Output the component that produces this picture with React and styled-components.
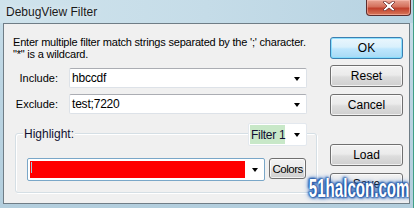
import React from 'react';
import styled, { createGlobalStyle } from 'styled-components';

const GlobalStyle = createGlobalStyle`
    html, body {
        margin: 0;
        padding: 0;
        background: #ffffff;
    }
    body {
        font-family: "Liberation Sans", Arial, sans-serif;
        font-size: 11px;
        color: #000;
    }
`;

const App = () => {
    return (
        <>
            <GlobalStyle />
            <Window>
                <TitleBar>
                    <Title>DebugView Filter</Title>
                    <CloseButton>
                        <svg width="14" height="10" viewBox="0 0 14 10">
                            <path d="M3 0 L7 3 L11 0 L13 1 L9 5 L13 9 L11 10 L7 7 L3 10 L1 9 L5 5 L1 1 Z" fill="#fff" stroke="#6b2a2a" strokeWidth="0.8" />
                        </svg>
                    </CloseButton>
                </TitleBar>
                <Client>
                    <MainColumn>
                        <Description>
                            <DescLine>Enter multiple filter match strings separated by the ';' character.</DescLine>
                            <DescLine>"*" is a wildcard.</DescLine>
                        </Description>
                        <FieldRow $top={8}>
                            <Label>Include:</Label>
                            <Combo $width={238}>
                                <ComboText>hbccdf</ComboText>
                                <Arrow />
                            </Combo>
                        </FieldRow>
                        <FieldRow $top={6}>
                            <Label>Exclude:</Label>
                            <Combo $width={238}>
                                <ComboText>test;7220</ComboText>
                                <Arrow />
                            </Combo>
                        </FieldRow>
                        <GroupBox>
                            <Legend>Highlight:</Legend>
                            <FilterCombo>
                                <FilterText>Filter 1</FilterText>
                                <Arrow />
                            </FilterCombo>
                            <ColorRow>
                                <ColorCombo>
                                    <RedFill>
                                        <Caret />
                                    </RedFill>
                                    <Arrow />
                                </ColorCombo>
                                <SmallButton>Colors</SmallButton>
                            </ColorRow>
                        </GroupBox>
                    </MainColumn>
                    <ButtonColumn>
                        <Button $default>OK</Button>
                        <Button $top={6}>Reset</Button>
                        <Button $top={7}>Cancel</Button>
                        <Button $top={28}>Load</Button>
                        <Button $top={7}>Save</Button>
                    </ButtonColumn>
                    <Watermark>51halcon.com</Watermark>
                </Client>
            </Window>
        </>
    );
};

const Window = styled.div`
    position: relative;
    width: 409px;
    height: 204px;
    padding: 0 3px 4px 1px;
    background: linear-gradient(to bottom, #c9dfea 0%, #bcd5e3 40%, #b3cedd 100%);
    border-right: 1px solid #3f9f86;
    display: flex;
    flex-direction: column;
`;

const TitleBar = styled.div`
    height: 23px;
    display: flex;
    align-items: flex-start;
    justify-content: space-between;
    background: linear-gradient(to right, #cfe3ec 0%, #c5dce8 50%, #b7d3e2 100%);
    margin: 0 -3px 0 -1px;
    padding: 0 0 0 6px;
`;

const Title = styled.div`
    font-size: 12px;
    color: #1a1a1a;
    margin-top: 5px;
    text-shadow: 0 0 6px rgba(255, 255, 255, 0.7);
`;

const CloseButton = styled.div`
    width: 43px;
    height: 15px;
    margin-right: 2px;
    border: 1px solid #5b2e2e;
    border-top: none;
    border-radius: 0 0 4px 4px;
    background: linear-gradient(to bottom, #e8a493 0%, #d4705c 45%, #c0402c 55%, #d8785a 100%);
    display: flex;
    align-items: flex-start;
    justify-content: center;
    box-shadow: inset 0 0 0 1px rgba(255, 200, 190, 0.5);
    svg {
        margin-top: 1px;
    }
`;

const Client = styled.div`
    position: relative;
    flex: 1;
    margin-left: 2px;
    background: #f0f0f0;
    border: 1px solid #6f7d86;
    display: flex;
    padding: 0 8px 0 9px;
    overflow: hidden;
`;

const MainColumn = styled.div`
    width: 305px;
    display: flex;
    flex-direction: column;
`;

const Description = styled.div`
    margin-top: 12px;
    line-height: 12px;
    letter-spacing: -0.2px;
`;

const DescLine = styled.div`
    white-space: nowrap;
`;

const FieldRow = styled.div`
    display: flex;
    align-items: center;
    margin-top: ${p => p.$top}px;
`;

const Label = styled.div`
    width: 45px;
    text-align: right;
    margin-right: 11px;
    white-space: nowrap;
`;

const Combo = styled.div`
    width: ${p => p.$width}px;
    height: 20px;
    box-sizing: border-box;
    background: #fff;
    border: 1px solid #dde2e8;
    border-top-color: #abadb3;
    border-radius: 2px;
    display: flex;
    align-items: center;
    padding: 0 6px 0 2px;
`;

const ComboText = styled.div`
    flex: 1;
    font-size: 12px;
    letter-spacing: -0.2px;
`;

const Arrow = styled.div`
    width: 0;
    height: 0;
    border-left: 3.5px solid transparent;
    border-right: 3.5px solid transparent;
    border-top: 4px solid #000;
    margin-top: 1px;
`;

const GroupBox = styled.div`
    position: relative;
    margin-top: 19px;
    margin-left: 2px;
    width: 302px;
    height: 60px;
    box-sizing: border-box;
    border: 1px solid #d5dfe5;
    box-shadow: inset 1px 1px 0 #fff, 1px 1px 0 #fff;
    border-radius: 3px;
    padding: 24px 10px 0 11px;
`;

const Legend = styled.div`
    position: absolute;
    top: -7px;
    left: 7px;
    padding: 0 1px;
    background: #f0f0f0;
    font-size: 12px;
    color: #101030;
`;

const FilterCombo = styled.div`
    position: absolute;
    top: -11px;
    right: 9px;
    width: 59px;
    height: 23px;
    box-sizing: border-box;
    background: #fff;
    border: 1px solid #e3e8ee;
    border-radius: 2px;
    display: flex;
    align-items: center;
    padding: 1px 6px 1px 1px;
`;

const FilterText = styled.div`
    align-self: stretch;
    width: 39px;
    margin-right: 9px;
    background: #c8e8c8;
    display: flex;
    align-items: center;
    padding-left: 1px;
    font-size: 12px;
    white-space: nowrap;
    letter-spacing: -0.3px;
    color: #101030;
`;

const ColorRow = styled.div`
    display: flex;
    align-items: flex-start;
    gap: 4px;
`;

const ColorCombo = styled.div`
    width: 240px;
    height: 23px;
    box-sizing: border-box;
    background: #fff;
    border: 1px solid #7aa7c8;
    border-radius: 2px;
    display: flex;
    align-items: center;
    padding: 2px 6px 2px 2px;
    gap: 7px;
`;

const RedFill = styled.div`
    flex: 1;
    align-self: stretch;
    background: #ff0000;
    position: relative;
`;

const Caret = styled.div`
    position: absolute;
    left: 1px;
    top: 1px;
    width: 1px;
    height: 11px;
    background: #9bd0e0;
`;

const SmallButton = styled.div`
    width: 37px;
    height: 21px;
    box-sizing: border-box;
    border: 1px solid #707070;
    border-radius: 3px;
    background: linear-gradient(to bottom, #f2f2f2 0%, #ebebeb 45%, #dddddd 55%, #cfcfcf 100%);
    box-shadow: inset 0 0 0 1px rgba(255, 255, 255, 0.7);
    display: flex;
    align-items: center;
    justify-content: center;
    white-space: nowrap;
    font-size: 11.5px;
    letter-spacing: -0.5px;
`;

const ButtonColumn = styled.div`
    margin-left: 13px;
    display: flex;
    flex-direction: column;
    padding-top: 13px;
`;

const Button = styled.div`
    width: 73px;
    height: 22px;
    box-sizing: border-box;
    margin-top: ${p => p.$top || 0}px;
    border: 1px solid ${p => (p.$default ? '#3c7fb1' : '#707070')};
    border-radius: 3px;
    background: ${p => (p.$default
        ? 'linear-gradient(to bottom, #eaf6fd 0%, #d9f0fc 45%, #bee6fd 55%, #a7d9f5 100%)'
        : 'linear-gradient(to bottom, #f2f2f2 0%, #ebebeb 45%, #dddddd 55%, #cfcfcf 100%)')};
    box-shadow: inset 0 0 0 1px ${p => (p.$default ? 'rgba(120, 220, 255, 0.8)' : 'rgba(255, 255, 255, 0.7)')};
    display: flex;
    align-items: center;
    justify-content: center;
    font-size: 12px;
`;

const Watermark = styled.div`
    position: absolute;
    right: 0px;
    bottom: 0px;
    font-weight: bold;
    font-size: 26px;
    line-height: 30px;
    color: #ffffff;
    white-space: nowrap;
    transform: scaleX(0.58);
    transform-origin: right center;
    text-shadow:
        0 0 2px #1d4f9c,
        0 0 3px #1d4f9c,
        2px 1px 3px #2a63b8,
        -2px -1px 3px #2a63b8,
        0 0 6px #3a78c8,
        0 0 9px #5b8fd6;
`;

export default App;
